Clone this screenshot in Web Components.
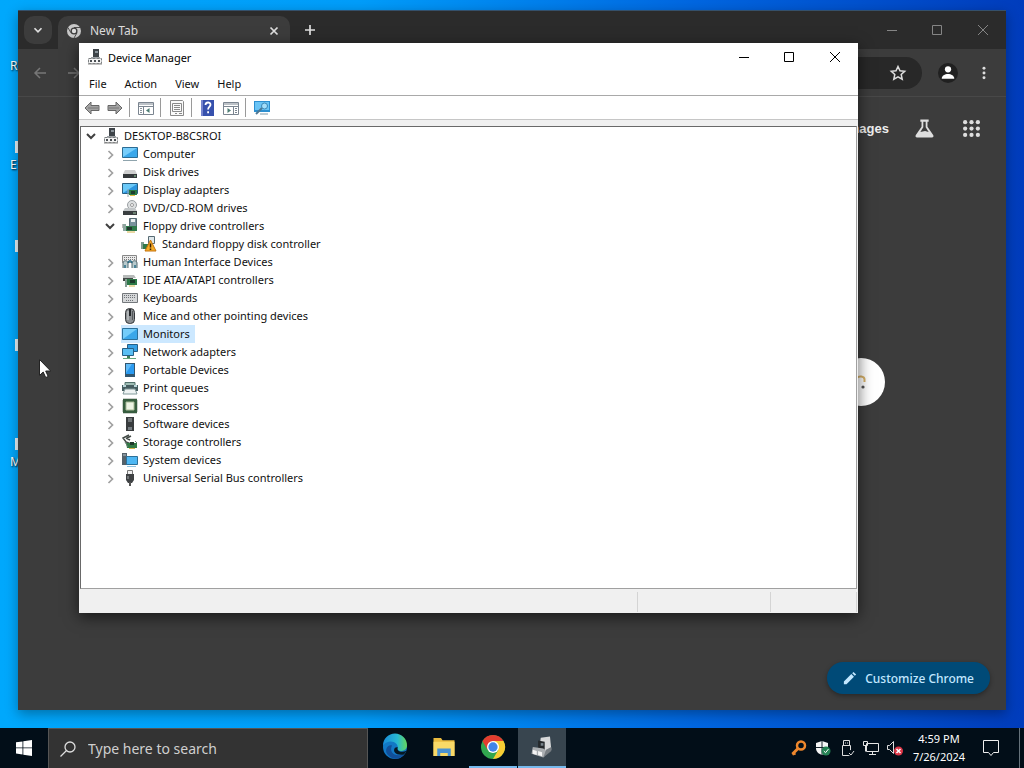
<!DOCTYPE html>
<html lang="en">
<head>
<meta charset="utf-8">
<title>Desktop</title>
<style>
    html, body {
        height: 100%;
        margin: 0;
    }
    body {
        font-family: "Noto Sans", "Open Sans", sans-serif;
        font-size: 11px;
        overflow: hidden;
    }
</style>
</head>
<body>
<win-desktop>
    <chrome-window></chrome-window>
    <device-manager></device-manager>
</win-desktop>

<script>
const icons = {
    // toolbar
    back: `<path d="M1 8l6-6v3.500h8v5H7V14z" fill="#a3a3a3" stroke="#666"/><path d="M4 8h10" stroke="#777"/>`,
    forward: `<path d="M15 8L9 2v3.500H1v5h8V14z" fill="#a3a3a3" stroke="#666"/><path d="M2 8h10" stroke="#777"/>`,
    tree: `<path d="M.5 2.500h15v12H.5z" fill="#fff" stroke="#7b8590"/><path d="M1 4h14M1 6.500h14" stroke="#7b8590"/><path d="M5.500 6.500v8" stroke="#7b8590"/><path d="M2 8.500h2M2 10.500h2M2 12.500h2" stroke="#8a949c"/><path d="M11.500 8v5L8 10.500z" fill="#4d7d74"/>`,
    sheet: `<path d="M1.500 .5h12l1 1v14h-13z" fill="#fafafa" stroke="#8a8a8a"/><path d="M3.500 3.500h9v8h-9zM5 5.500h6M5 7.500h6M5 9.500h6M6 13.500h2M10 13.500h3" stroke="#8a8a8a" fill="none"/>`,
    help: `<path d="M1 0h13v16H1z" fill="#3751ad"/><path d="M1 0h2v16H1z" fill="#7584cd"/><path d="M5.500 5c0-3.300 5-3.300 5-.3 0 2-2.400 2-2.400 4.800M8.100 11.300v2" fill="none" stroke="#fff" stroke-width="1.800"/>`,
    panel: `<path d="M.5 2.500h15v12H.5z" fill="#fff" stroke="#7b8590"/><path d="M1 4h14M1 6.500h14M10.500 6.500v8" stroke="#7b8590"/><path d="M12 8.500h2M12 10.500h2M12 12.500h2" stroke="#7b8590"/><path d="M4.500 8v5L8 10.500z" fill="#4d7d74"/>`,
    scan: `<path d="M0 1h16v11H0z" fill="#2d8fd0"/><path d="M1 2h14v8H1z" fill="#6ac4f5"/><circle cx="10.500" cy="6" r="3" fill="#a5def9" stroke="#3a88b8"/><path d="M8 8l-6 6" stroke="#4e7894" stroke-width="2"/><path d="M6 14h8" stroke="#7d98a8"/>`,
    // device classes
    root: `<path d="M6 0h6v8H6z" fill="#3d4348"/><path d="M8 2h3v2H8z" fill="#8a949b"/><path d="M4 8h9v3H4z" fill="#9da2a6"/><path d="M1.500 9.500h13v5h-13z" fill="#f5f5f5" stroke="#7c8082" stroke-dasharray="3 1"/><path d="M3 11h2v2H3zM7 11h2v2H7zM11 11h2v2h-2z" fill="#4b5054"/><path d="M1 15h14" stroke="#888"/>`,
    computer: `<path d="M.5 1.500h15v10H.5z" fill="#3aa7ea" stroke="#2c6c94"/><path d="M1 2h14L1 11z" fill="#77cdfb"/><path d="M1 14.500h14" stroke="#8fa4ad"/>`,
    disk: `<path d="M3 6h10l2 4H1z" fill="#cfcfcf"/><path d="M1 10h14v4H1z" fill="#34383a"/><path d="M12 12h2" stroke="#9bd6a5"/>`,
    display: `<path d="M.5 1.500h15v10H.5z" fill="#2d96df" stroke="#286084"/><path d="M1 2h14L1 11z" fill="#6bc9f8"/><path d="M7 8h8v5H7z" fill="#2b7a45"/><path d="M9 9h4v3H9z" fill="#1d3f30"/><path d="M8 13.500h5" stroke="#e3bb44"/><path d="M6 7v8" stroke="#9aa"/>`,
    dvd: `<circle cx="10" cy="5" r="4.500" fill="#dde0e1" stroke="#9a9fa2"/><circle cx="10" cy="5" r="1.500" fill="#fff" stroke="#999"/><path d="M3 8h10l2 3H1z" fill="#c2c6c8"/><path d="M1 11h14v4H1z" fill="#3a3e40"/><path d="M11 13h3" stroke="#9cc5a2"/>`,
    floppy: `<path d="M7.500.5h7v8h-7z" fill="#78929c" stroke="#566a73"/><path d="M9 1h4v3H9z" fill="#e9eef0"/><path d="M1 6v4" stroke="#777"/><path d="M2 8h13v5H2z" fill="#2e7a4a"/><path d="M5 9h5v3H5z" fill="#24392f"/><path d="M1 6h3v7H1z" fill="#8fa7a0"/><path d="M5 14h8" stroke="#d4b14a"/>`,
    warning: `<path d="M7.500.5h6v7h-6z" fill="#dfe7ea" stroke="#566a73"/><path d="M0 6h3v7H0z" fill="#809e92"/><path d="M2 8h8v5H2z" fill="#2e7a4a"/><path d="M9.500 4l5.500 11h-11z" fill="#f5ad28" stroke="#c5730c"/><path d="M9.500 7.500v4M9.500 12.500v1.500" stroke="#3e2206" stroke-width="1.500"/>`,
    hid: `<path d="M.5 1.500h14v7H.5z" fill="#eaeaea" stroke="#888"/><path d="M2 3.500h12M2 5.500h12" stroke="#777" stroke-dasharray="1 1"/><path d="M1 14V9c0-3 5-3 5 0v5M10 14V9c0-3 5-3 5 0v5" fill="#b8cacd" stroke="#52696f"/><path d="M6 9c1-3 3-3 4 0M3 11v3M13 11v3" fill="none" stroke="#286d87" stroke-width="1.500"/>`,
    ide: `<path d="M1 3h11l2 3H1z" fill="#b6bab9"/><path d="M1 6h10v3H1z" fill="#424846"/><path d="M5 7h10v6H5z" fill="#2d7948"/><path d="M8 8h5v3H8z" fill="#1c3a2c"/><path d="M4 7v8" stroke="#839c92" stroke-width="2"/><path d="M7 14h6" stroke="#d4b14a"/>`,
    keyboard: `<path d="M.5 3.500h15v9H.5z" fill="#d5d7d9" stroke="#74787c"/><path d="M2 5.500h12M2 7.500h12M4 10.500h8" stroke="#6f7378" stroke-dasharray="1 1"/>`,
    mouse: `<rect x="3.500" y=".5" width="9" height="15" rx="4" fill="#8b8f92" stroke="#34373a"/><path d="M6 3v9" stroke="#d3d7d9"/><path d="M8 1v7" stroke="#24272a" stroke-width="2"/><path d="M10.500 3v9" stroke="#54585b"/>`,
    monitor: `<path d="M.5 2.500h15v11H.5z" fill="#3aa7ea" stroke="#2c719b"/><path d="M1 3h14L1 13z" fill="#73cdfa"/>`,
    network: `<path d="M5.500.5h10v7h-10z" fill="#35a0e5" stroke="#265f86"/><path d="M.5 4.500h11v7H.5z" fill="#5abff4" stroke="#265f86"/><path d="M5 12h3v2H5z" fill="#407f5b"/><path d="M1 14.500h13" stroke="#65a67b"/>`,
    portable: `<path d="M3 1h10v14H3z" fill="#31566f"/><path d="M4 2h8v10H4z" fill="#2a9af0"/><path d="M4 2h6l-6 9z" fill="#61bbf7"/>`,
    printer: `<path d="M3 2.500h10v4H3z" fill="#9fbdb5" stroke="#51706b"/><path d="M0 5h16v6H0z" fill="#465d60"/><path d="M1 6h3M12 6h3" stroke="#b8d5d8" stroke-width="2"/><path d="M3 9h10l2 5H1z" fill="#eef3f3" stroke="#81999a"/>`,
    cpu: `<path d="M1.500 1.500h13v13h-13z" fill="#3d6148" stroke="#2c4432" stroke-width="2" stroke-dasharray="1 1"/><path d="M1 1h14v14H1z" fill="#365c3e"/><path d="M4 4h8v8H4z" fill="#edf3e4" stroke="#a8bb98"/>`,
    software: `<path d="M4 1h8v14H4z" fill="#393c3e"/><path d="M6 3h4M6 5h4" stroke="#a8aeb1"/><path d="M6 11h4v3H6z" fill="#777e83"/>`,
    storage: `<path d="M7 1L1 4l3 4 5 2M4 4l4 2M5 4l4-2" fill="none" stroke="#434b47" stroke-width="1.500"/><path d="M4 9h11v5H5z" fill="#327a45"/><path d="M8 8h4v3H8z" fill="#1e382a"/><path d="M3 8l3 5M13 7l2 2" stroke="#647a70"/><path d="M7 14.500h6" stroke="#d4b14a"/>`,
    system: `<path d="M0 1h5v12H0z" fill="#54616a"/><path d="M1 3h3" stroke="#b3c5cf"/><path d="M4.500 4.500h11v8h-11z" fill="#4eb7f3" stroke="#2b7099"/><path d="M5 14.500h9" stroke="#8fc2df"/>`,
    usb: `<path d="M5.500.5h5v4h-5z" fill="#eee" stroke="#777"/><path d="M4 4h8v6l-2 3H6L4 10z" fill="#3f4244"/><path d="M6 6v3" stroke="#a5a9ab"/><path d="M8 12v4" stroke="#555" stroke-width="2"/>`,
    // glyphs in the current colour
    down: `<path d="M4 6l4 4 4-4" fill="none" stroke="currentColor" stroke-width="2"/>`,
    right: `<path d="M6.500 5l4 4-4 4" fill="none" stroke="currentColor" stroke-width="1.700"/>`,
    minimize: `<path d="M4 8.500h10" stroke="currentColor"/>`,
    maximize: `<path d="M3.500 3.500h9v9h-9z" fill="none" stroke="currentColor"/>`,
    close: `<path d="M3 3l10 10M13 3L3 13" stroke="currentColor"/>`,
    cross: `<path d="M4 4l8 8M12 4l-8 8" stroke="currentColor" stroke-width="2"/>`,
    plus: `<path d="M8 3v10M3 8h10" stroke="currentColor" stroke-width="1.700"/>`,
    left: `<path d="M14 8H3M8 3L3 8l5 5" fill="none" stroke="currentColor" stroke-width="1.500"/>`,
    next: `<path d="M2 8h11M8 3l5 5-5 5" fill="none" stroke="currentColor" stroke-width="1.500"/>`,
    star: `<path d="M8 1.500l2 4.300 4.700.5-3.500 3.200 1 4.700L8 11.800l-4.200 2.400 1-4.700L1.300 6.300 6 5.800z" fill="none" stroke="currentColor" stroke-width="1.500"/>`,
    dots: `<circle cx="8" cy="2.500" r="1.700" fill="currentColor"/><circle cx="8" cy="8" r="1.700" fill="currentColor"/><circle cx="8" cy="13.500" r="1.700" fill="currentColor"/>`,
    person: `<circle cx="8" cy="8" r="8" fill="#202020"/><circle cx="8" cy="5" r="2.500" fill="#fff"/><path d="M3 12.500c0-5 10-5 10 0z" fill="#fff"/>`,
    flask: `<path d="M4.500.5h7v1.800h-1v4.200l4.800 7c.7 1.200 0 2-1 2H1.700c-1 0-1.700-.8-1-2l4.800-7V2.300h-1z" fill="currentColor"/><path d="M7 2.300h2v4.700L11.500 11l-3-1-4 1L7 7z" fill="#3c3c3c"/>`,
    grid: [2, 8, 14].map(y => [2, 8, 14].map(x => `<circle cx="${x}" cy="${y}" r="2" fill="currentColor"/>`).join('')).join(''),
    pencil: `<path d="M1 15v-3l8.500-8.500 3 3L4 15zM10.500 2.500L12 1l3 3-1.500 1.500z" fill="currentColor"/>`,
    chromegray: `<circle cx="8" cy="8" r="8" fill="#c8c8c8"/><circle cx="8" cy="8" r="4" fill="#3c3c3c"/><circle cx="8" cy="8" r="2.500" fill="#dedede"/><path d="M8 4h7M4.500 10L1 4M11.500 10L8 16" stroke="#3c3c3c"/>`,
    site: `<path d="M4 4a4 3 0 0 1 7.500 1v3" fill="none" stroke="#d9b36a" stroke-width="2"/><circle cx="10" cy="13" r="1.600" fill="#555"/>`,
    // taskbar
    windows: `<path d="M0 2.300L6.500 1.400v6.100H0zM7.300 1.300L16 0v7.500H7.300zM0 8.300h6.500v6.200L0 13.600zM7.300 8.300H16V16l-8.700-1.300z" fill="#fff"/>`,
    search: `<circle cx="10" cy="6" r="5" fill="none" stroke="currentColor" stroke-width="1.300"/><path d="M6.500 9.500L.5 15.500" stroke="currentColor" stroke-width="1.300"/>`,
    edge: `<defs><linearGradient id="a" x2="1"><stop stop-color="#188bd9"/><stop offset=".6" stop-color="#28b8d2"/><stop offset="1" stop-color="#65d75b"/></linearGradient></defs><circle cx="8" cy="8" r="8" fill="#1278c5"/><path d="M0 7a8 8 0 0 1 16 0c0 4-6 4.500-6.200 2.500C11 5 4 2 0 7z" fill="url(#a)"/><path d="M6 7c-2 4 1 8 8 6-2 3-7 4-10 1-4-3-1-8 2-7z" fill="#114f99"/><path d="M9.800 8c-1 3 2.500 4 6 2.500L14 13c-5 1-8-2-6-4.500z" fill="#071722"/>`,
    folder: `<path d="M1 2h5l1 1.500h8V14H1z" fill="#eabb3f"/><path d="M1 4.500h14V14H1z" fill="#f9d967"/><path d="M3.500 9h9v5h-2v-2h-5v2h-2z" fill="#4a92d2"/>`,
    chrome: `<circle cx="8" cy="8" r="8" fill="#31a64f"/><path d="M1 4.100A8 8 0 0 1 15 4H8L4.500 10z" fill="#e33c2f"/><path d="M15 4a8 8 0 0 1-7 12l3.500-6L8 4z" fill="#f9cd34"/><circle cx="8" cy="8" r="4" fill="#fff"/><circle cx="8" cy="8" r="3.100" fill="#4285e8"/>`,
    device: `<g transform="translate(1 1) scale(.88)"><path d="M7 1l7-1 1 10-6 2-3-3z" fill="#d8d9da"/><path d="M5 3l5 1v6L5 9z" fill="#25292c"/><path d="M7 5h2v2H7z" fill="#78838b"/><path d="M1 8l8 1 3 3-3 4-9-3z" fill="#aaaeb1"/><path d="M1 10l3 1v3l-3-1zM5 11l3 1v3l-3-1z" fill="#f4f4f4"/><path d="M11 10l4-2v3l-6 5z" fill="#777d82"/></g>`,
    key: `<circle cx="10" cy="5.500" r="4" fill="none" stroke="#ee872d" stroke-width="2.500"/><path d="M7 8.500L1.500 14l3-1" fill="none" stroke="#ee872d" stroke-width="3"/>`,
    shield: `<path d="M7 1l6 2v5c0 4-3 6-6 7-3-1-6-3-6-7V3z" fill="#f5f5f5"/><path d="M7 1v14M1 7.500h12" stroke="#18242d"/><circle cx="11" cy="11" r="4.500" fill="#258254"/><path d="M8.800 11l1.700 1.700L13.500 9" fill="none" stroke="#fff"/>`,
    drive: `<path d="M4.500.5h6v5h-6zM3.500 5.500h8v10h-8z" fill="none" stroke="#ddd"/><path d="M6 3h1M8 3h1" stroke="#ddd"/><circle cx="12" cy="13" r="3" fill="#020e18"/><path d="M10 13l2 2 3-4" fill="none" stroke="#ddd"/>`,
    ethernet: `<path d="M3.500 3.500h12v8h-12zM6 14.500h7M9.500 11.500v3M.5 1.500h4v4h-4zM2.500 5.500v6" fill="none" stroke="#e5e5e5"/>`,
    mute: `<path d="M.5 5.500h2l4-4v12l-4-4h-2z" fill="none" stroke="#ddd"/><circle cx="11.500" cy="11" r="4.500" fill="#dc3647"/><path d="M9.500 9l4 4M13.500 9l-4 4" stroke="#fff" stroke-width="1.500"/>`,
    note: `<path d="M.5 .5h15v12h-5L8 15.500l-2.500-3h-5z" fill="none" stroke="#eee"/>`
};

class UiIcon extends HTMLElement {
    constructor() {
        super();
        this.attachShadow({ mode: 'open' });
    }

    connectedCallback() {
        const name = this.getAttribute('name');
        this.shadowRoot.innerHTML = `
            <style>
                :host { display: block; flex: none; width: var(--size, 16px); height: var(--size, 16px); }
                svg { display: block; width: 100%; height: 100%; overflow: visible; }
            </style>
            <svg viewBox="0 0 16 16" aria-hidden="true">${icons[name]}</svg>
        `;
    }
}
customElements.define('ui-icon', UiIcon);

class WindowControls extends HTMLElement {
    constructor() {
        super();
        this.attachShadow({ mode: 'open' });
        this.shadowRoot.innerHTML = `
            <style>
                :host { display: flex; margin-left: auto; }
                button { display: flex; align-items: center; justify-content: center; width: 46px; padding: 0; border: 0; background: none; color: inherit; }
            </style>
            <button aria-label="Minimize"><ui-icon name="minimize"></ui-icon></button>
            <button aria-label="Maximize"><ui-icon name="maximize"></ui-icon></button>
            <button aria-label="Close"><ui-icon name="close"></ui-icon></button>
        `;
    }
}
customElements.define('window-controls', WindowControls);

class ChromeWindow extends HTMLElement {
    constructor() {
        super();
        this.attachShadow({ mode: 'open' });
        this.shadowRoot.innerHTML = `
            <style>
                :host { display: flex; flex-direction: column; background: #3c3c3c; color: #dedede; border-top: 1px solid #35506a; box-sizing: border-box; }
                button { display: flex; align-items: center; justify-content: center; padding: 0; border: 0; background: none; color: inherit; font: inherit; }
                .tabs { display: flex; height: 38px; background: #2b2b2b; }
                .list { width: 28px; height: 28px; margin: 5px 6px; border-radius: 10px; background: #3c3c3c; }
                .tab { display: flex; align-items: center; gap: 9px; width: 232px; box-sizing: border-box; margin-top: 5px; padding: 0 9px 4px; border-radius: 10px 10px 0 0; background: #3c3c3c; font-size: 12px; }
                .tab span { flex: 1; }
                .tab ui-icon, .list ui-icon { --size: 14px; }
                .new { width: 40px; }
                window-controls { color: #858585; }
                .bar { display: flex; align-items: center; height: 47px; padding: 0 14px; border-bottom: 1px solid #484848; }
                .nav { width: 34px; height: 32px; justify-content: start; color: #777; }
                .address { display: flex; align-items: center; flex: 1; height: 32px; margin: 0 12px 0 24px; padding-right: 16px; border-radius: 16px; background: #282828; }
                input { flex: 1; min-width: 0; border: 0; background: none; color: inherit; }
                .profile { width: 28px; --size: 20px; margin-right: 14px; }
                .dots { width: 16px; --size: 14px; }
                main { display: flex; flex-direction: column; flex: 1; padding: 15px 16px 16px; }
                .links { display: flex; align-items: center; justify-content: end; gap: 26px; height: 32px; padding-right: 10px; }
                .links a { color: #eee; text-decoration: none; font: bold 13px "Liberation Sans", sans-serif; }
                .flask { --size: 19px; }
                .grid { --size: 17px; margin-left: 3px; }
                .sites { display: flex; justify-content: end; align-self: center; width: 78%; margin: auto 0 42px; }
                .site { width: 48px; height: 48px; border-radius: 24px; background: #fff; }
                .custom { align-self: end; gap: 8px; margin-top: auto; height: 32px; padding: 0 16px; border-radius: 16px; background: #004a77; color: #c2e7ff; font-size: 12px; font-weight: 500; box-shadow: 0 2px 5px #0005; --size: 14px; }
            </style>
            <div class="tabs">
                <button class="list" aria-label="Search tabs"><ui-icon name="down"></ui-icon></button>
                <div class="tab">
                    <ui-icon name="chromegray"></ui-icon>
                    <span>New Tab</span>
                    <button aria-label="Close tab"><ui-icon name="cross"></ui-icon></button>
                </div>
                <button class="new" aria-label="New tab"><ui-icon name="plus"></ui-icon></button>
                <window-controls></window-controls>
            </div>
            <div class="bar">
                <button class="nav" aria-label="Back"><ui-icon name="left"></ui-icon></button>
                <button class="nav" aria-label="Forward"><ui-icon name="next"></ui-icon></button>
                <div class="address">
                    <input aria-label="Address">
                    <button aria-label="Bookmark"><ui-icon name="star"></ui-icon></button>
                </div>
                <button class="profile" aria-label="Profile"><ui-icon name="person"></ui-icon></button>
                <button class="dots" aria-label="Chrome menu"><ui-icon name="dots"></ui-icon></button>
            </div>
            <main>
                <div class="links">
                    <a href="#">Images</a>
                    <button class="flask" aria-label="Search Labs"><ui-icon name="flask"></ui-icon></button>
                    <button class="grid" aria-label="Google apps"><ui-icon name="grid"></ui-icon></button>
                </div>
                <div class="sites"><button class="site" aria-label="Shortcut"><ui-icon name="site"></ui-icon></button></div>
                <button class="custom"><ui-icon name="pencil"></ui-icon>Customize Chrome</button>
            </main>
        `;
    }
}
customElements.define('chrome-window', ChromeWindow);

class TreeRow extends HTMLElement {
    constructor() {
        super();
        this.attachShadow({ mode: 'open' });
    }

    connectedCallback() {
        const level = Number(this.getAttribute('level'));
        const open = this.hasAttribute('open');
        this.setAttribute('role', 'treeitem');

        this.shadowRoot.innerHTML = `
            <style>
                :host { display: flex; align-items: center; gap: 3px; height: 18px; padding-left: calc(2px + 19px * ${level}); }
                button { width: 16px; height: 16px; padding: 0; border: 0; background: none; color: ${open ? '#404040' : '#a0a0a0'}; }
                .leaf { visibility: hidden; }
                .item { display: flex; align-items: center; gap: 5px; height: 18px; padding: 0 5px 0 1px; line-height: 18px; }
                :host([selected]) .item { background: #cce8ff; }
            </style>
            <button class="${this.hasAttribute('leaf') ? 'leaf' : ''}" aria-label="Toggle"><ui-icon name="${open ? 'down' : 'right'}"></ui-icon></button>
            <span class="item"><ui-icon name="${this.getAttribute('icon')}"></ui-icon><slot></slot></span>
        `;
    }
}
customElements.define('tree-row', TreeRow);

class DeviceManager extends HTMLElement {
    constructor() {
        super();
        this._menu = ["File", "Action", "View", "Help"];
        this._tools = ["back", "forward", "", "tree", "", "sheet", "", "help", "panel", "", "scan"];
        this._rows = [
            [0, "root", "DESKTOP-B8CSROI", "open"],
            [1, "computer", "Computer"],
            [1, "disk", "Disk drives"],
            [1, "display", "Display adapters"],
            [1, "dvd", "DVD/CD-ROM drives"],
            [1, "floppy", "Floppy drive controllers", "open"],
            [2, "warning", "Standard floppy disk controller", "leaf"],
            [1, "hid", "Human Interface Devices"],
            [1, "ide", "IDE ATA/ATAPI controllers"],
            [1, "keyboard", "Keyboards"],
            [1, "mouse", "Mice and other pointing devices"],
            [1, "monitor", "Monitors", "selected"],
            [1, "network", "Network adapters"],
            [1, "portable", "Portable Devices"],
            [1, "printer", "Print queues"],
            [1, "cpu", "Processors"],
            [1, "software", "Software devices"],
            [1, "storage", "Storage controllers"],
            [1, "system", "System devices"],
            [1, "usb", "Universal Serial Bus controllers"]
        ];

        const menu = this._menu.map( name => `<button>${name}</button>`).join('');
        const tools = this._tools.map( name => {
            if (name == "") {
                return `<i></i>`
            }
            return `<button aria-label="${name}"><ui-icon name="${name}"></ui-icon></button>`
        }).join('');
        const rows = this._rows.map( ([level, icon, name, state]) => {
            return `<tree-row level="${level}" icon="${icon}" ${state || ''}>${name}</tree-row>`
        }).join('');

        this.attachShadow({ mode: 'open' });
        this.shadowRoot.innerHTML = `
            <style>
                :host { display: flex; flex-direction: column; background: #fff; color: #111; box-sizing: border-box; }
                button { padding: 0; border: 0; background: none; color: inherit; font: inherit; }
                header { display: flex; height: 28px; color: #000; }
                .title { display: flex; align-items: center; gap: 5px; padding-left: 8px; }
                .menu { display: flex; height: 24px; padding-left: 1px; border-bottom: 1px solid #a9a9a9; }
                .menu button { padding: 0 9px; }
                .tools { display: flex; height: 23px; padding-left: 1px; border-bottom: 1px solid #c6c6c6; }
                .tools button { display: flex; align-items: center; justify-content: center; width: 23px; }
                .tools i { width: 1px; height: 19px; margin: 2px 4px 2px 3px; background: #9a9a9a; }
                .body { display: flex; flex-direction: column; flex: 1; padding: 6px 1px 0; background: #f0f0f0; }
                .tree { flex: 1; background: #fff; border: 1px solid #a0a0a0; border-top-color: #696969; border-left-color: #696969; }
                footer { display: flex; height: 20px; margin-top: 2px; padding: 1px 0; }
                footer span { border-right: 1px solid #d4d4d4; }
                footer span:first-child { flex: 1; }
                footer span:nth-child(2) { width: 132px; }
                footer span:nth-child(3) { width: 85px; }
            </style>
            <header>
                <div class="title"><ui-icon name="root"></ui-icon><span>Device Manager</span></div>
                <window-controls></window-controls>
            </header>
            <nav class="menu">${menu}</nav>
            <div class="tools">${tools}</div>
            <div class="body">
                <div class="tree" role="tree">${rows}</div>
                <footer><span></span><span></span><span></span></footer>
            </div>
        `;
    }
}
customElements.define('device-manager', DeviceManager);

class DesktopShortcut extends HTMLElement {
    constructor() {
        super();
        this.attachShadow({ mode: 'open' });
        this.shadowRoot.innerHTML = `
            <style>
                :host { display: flex; flex-direction: column; align-items: end; height: 99px; color: #fff; font-size: 12px; text-shadow: 1px 1px 2px #000; }
                .page { width: 3px; height: 12px; margin: 42px 0 3px; background: #e8f1f5; }
                :host([plain]) .page { background: none; }
                .name { width: 8px; height: 18px; line-height: 18px; }
            </style>
            <div class="page"></div>
            <div class="name"><slot></slot></div>
        `;
    }
}
customElements.define('desktop-shortcut', DesktopShortcut);

class WinTaskbar extends HTMLElement {
    constructor() {
        super();
        const tray = ["key", "shield", "drive", "ethernet", "mute"]
            .map( name => `<button aria-label="${name}"><ui-icon name="${name}"></ui-icon></button>`).join('');

        this.attachShadow({ mode: 'open' });
        this.shadowRoot.innerHTML = `
            <style>
                :host { display: flex; height: 40px; background: #020e18; color: #fff; }
                button { display: flex; align-items: center; justify-content: center; box-sizing: border-box; padding: 0; border: 0; background: none; color: inherit; font: inherit; }
                .start { width: 48px; }
                .search { display: flex; align-items: center; gap: 12px; width: 320px; box-sizing: border-box; padding: 0 11px; border: 1px solid #555; border-bottom: 0; background: #333; color: #ddd; }
                input { flex: 1; min-width: 0; padding: 0; border: 0; outline: 0; background: none; color: inherit; font: 14px "Noto Sans", sans-serif; }
                input::placeholder { color: #cfcfcf; opacity: 1; }
                .apps { display: flex; gap: 1px; padding-left: 3px; --size: 24px; }
                .apps button { width: 48px; border-bottom: 2px solid transparent; }
                .apps .open { border-bottom-color: #76b9ed; }
                .apps .active { background: #38454f; }
                .tray { display: flex; margin-left: auto; }
                .tray > button { width: 24px; }
                .tray > .clock { flex-direction: column; width: 64px; line-height: 18px; }
                .tray > .note { width: 40px; }
                .tray > .show { width: 5px; margin-left: 8px; border-left: 1px solid #66727b; }
            </style>
            <button class="start" aria-label="Start"><ui-icon name="windows"></ui-icon></button>
            <label class="search"><ui-icon name="search"></ui-icon><input type="search" aria-label="Search" placeholder="Type here to search"></label>
            <div class="apps">
                <button aria-label="Edge"><ui-icon name="edge"></ui-icon></button>
                <button aria-label="File Explorer"><ui-icon name="folder"></ui-icon></button>
                <button class="open" aria-label="Chrome"><ui-icon name="chrome"></ui-icon></button>
                <button class="open active" aria-label="Device Manager"><ui-icon name="device"></ui-icon></button>
            </div>
            <div class="tray">
                ${tray}
                <button class="clock"><span>4:59 PM</span><span>7/26/2024</span></button>
                <button class="note" aria-label="Notifications"><ui-icon name="note"></ui-icon></button>
                <button class="show" aria-label="Show desktop"></button>
            </div>
        `;
    }
}
customElements.define('win-taskbar', WinTaskbar);

class WinDesktop extends HTMLElement {
    constructor() {
        super();
        this.attachShadow({ mode: 'open' });
        this.shadowRoot.innerHTML = `
            <style>
                :host { display: flex; flex-direction: column; height: 100%; }
                .space { position: relative; flex: 1; background: linear-gradient(90deg, #00a8fc, #009dfa 35%, #0066e0 68%, #003cbc); }
                .shortcuts { width: 18px; overflow: hidden; }
                ::slotted(chrome-window) { position: absolute; inset: 10px 18px 18px; box-shadow: 0 4px 12px #0005; }
                ::slotted(device-manager) { position: absolute; inset: 43px 166px 115px 79px; box-shadow: 0 4px 14px #0009; }
                .cursor { position: absolute; left: 39px; top: 359px; width: 12px; height: 19px; }
            </style>
            <div class="space">
                <div class="shortcuts">
                    <desktop-shortcut plain>Re</desktop-shortcut>
                    <desktop-shortcut>E</desktop-shortcut>
                    <desktop-shortcut></desktop-shortcut>
                    <desktop-shortcut></desktop-shortcut>
                    <desktop-shortcut>M</desktop-shortcut>
                </div>
                <slot></slot>
                <svg class="cursor" viewBox="0 0 12 19"><path d="M.5.5v16l3.700-3.500 2.500 5.500 2.500-1-2.500-5.500h5z" fill="#fff" stroke="#222"/></svg>
            </div>
            <win-taskbar></win-taskbar>
        `;
    }
}
customElements.define('win-desktop', WinDesktop);
</script>
</body>
</html>
